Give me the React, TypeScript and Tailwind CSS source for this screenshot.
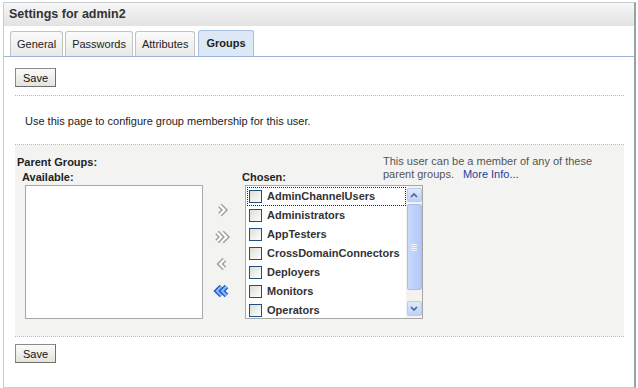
import React from "react";

const F = { fontFamily: '"Liberation Sans", Arial, sans-serif' };

function Chevron({ dir, double, blue }: { dir: "r" | "l"; double?: boolean; blue?: boolean }) {
  const outer = blue ? "#1d5fc4" : "#9c9c9c";
  const inner = blue ? "#8ab8ff" : "#ffffff";
  const one = (x: number) =>
    dir === "r" ? `M${x} 2.5 L${x + 4.5} 7 L${x} 11.5` : `M${x + 4.5} 2.5 L${x} 7 L${x + 4.5} 11.5`;
  const xs = double ? [4, 9] : [7];
  return (
    <svg width="20" height="14" viewBox="0 0 20 14">
      {xs.map((x) => (
        <g key={x}>
          <path d={one(x)} fill="none" stroke={outer} strokeWidth="5" strokeLinejoin="miter" />
          <path d={one(x)} fill="none" stroke={inner} strokeWidth="2.2" strokeLinejoin="miter" />
        </g>
      ))}
    </svg>
  );
}

function SaveBtn() {
  return (
    <button
      className="h-[19px] w-[41px] border border-[#8a8a8a] border-r-[#6f6f6f] border-b-[#6f6f6f] bg-gradient-to-b from-[#fbfbf9] to-[#e4e3dc] text-[11px] text-[#111] leading-[16px]"
      style={F}
    >
      Save
    </button>
  );
}

function Check() {
  return (
    <svg width="13" height="13" viewBox="0 0 13 13" className="shrink-0">
      <defs>
        <linearGradient id="cbg" x1="0" y1="0" x2="1" y2="1">
          <stop offset="0" stopColor="#dcdcd6" />
          <stop offset="1" stopColor="#ffffff" />
        </linearGradient>
      </defs>
      <rect x="0.5" y="0.5" width="12" height="12" fill="url(#cbg)" stroke="#1c5180" strokeWidth="1" />
    </svg>
  );
}

const items = [
  "AdminChannelUsers",
  "Administrators",
  "AppTesters",
  "CrossDomainConnectors",
  "Deployers",
  "Monitors",
  "Operators",
];

export default function App() {
  return (
    <div className="w-[638px] h-[388px] bg-white overflow-hidden" style={F}>
      <div className="ml-[3px] mt-[2px] w-[633px] h-[386px] border border-[#c9ccd0] border-r-2 border-r-[#9da0a3] flex flex-col">
        <div className="h-[23px] bg-gradient-to-b from-[#f7f7f7] via-[#ececec] to-[#e3e3e3] flex items-center pl-[5px] text-[12.5px] font-bold text-[#333]">
          Settings for admin2
        </div>
        <div className="mt-[5px] pl-[6px] flex items-end gap-[2px] border-b border-[#9db3d8] h-[26px]">
          {["General", "Passwords", "Attributes"].map((t) => (
            <div
              key={t}
              className="h-[25px] px-[6px] flex items-center border border-b-0 border-[#c3c3c3] rounded-t-[3px] bg-gradient-to-b from-[#fbfbfb] to-[#e9e9e9] text-[11px] text-[#222]"
            >
              {t}
            </div>
          ))}
          <div className="ml-[1px] h-[26px] px-[7px] flex items-center border border-b-0 border-[#a9bfdf] rounded-t-[3px] bg-[#dce8f6] text-[11px] font-bold text-[#222]">
            Groups
          </div>
        </div>
        <div className="pl-[11px] pr-[10px]">
          <div className="mt-[11px] flex">
            <SaveBtn />
          </div>
          <div className="mt-[8px] border-t border-dotted border-[#b5b5b5]" />
          <div className="mt-[18px] pl-[10px] text-[11px] text-[#222] leading-[14px]">
            Use this page to configure group membership for this user.
          </div>
          <div className="mt-[16px] border-t border-dotted border-[#b5b5b5]" />
          <div className="h-[191px] bg-[#f3f4f2] pl-[2px] flex flex-col">
            <div className="flex mt-[10px]">
              <div className="w-[366px]">
                <div className="text-[11px] font-bold text-[#222] leading-[14px]">Parent Groups:</div>
                <div className="flex text-[11px] font-bold text-[#222] leading-[14px] mt-[1px]">
                  <div className="pl-[5px] w-[225px]">Available:</div>
                  <div>Chosen:</div>
                </div>
              </div>
              <div className="text-[11px] text-[#555] leading-[13px] whitespace-nowrap">
                This user can be a member of any of these
                <br />
                parent groups.
                <span className="ml-[9px] text-[#1a3e9c]">More Info...</span>
              </div>
            </div>
            <div className="flex mt-[1px] pl-[8px]">
              <div className="w-[178px] h-[134px] bg-white border border-[#a8a8a8]" />
              <div className="w-[42px] flex flex-col items-center pt-[18px] gap-[13px] pr-[3px]">
                <Chevron dir="r" />
                <Chevron dir="r" double />
                <Chevron dir="l" />
                <Chevron dir="l" double blue />
              </div>
              <div className="w-[178px] h-[134px] bg-white border border-[#a8a8a8] flex">
                <div className="flex-1 pt-[1px] pl-[1px] overflow-hidden">
                  {items.map((it, i) => (
                    <div
                      key={it}
                      className={
                        "h-[19px] flex items-center gap-[5px] pl-[2px] " +
                        (i === 0 ? "outline outline-1 outline-dotted outline-[#222] -outline-offset-1" : "")
                      }
                    >
                      <Check />
                      <span className="text-[11px] font-bold text-[#333] whitespace-nowrap">{it}</span>
                    </div>
                  ))}
                </div>
                <div className="w-[16px] bg-[#f3f2ec] flex flex-col items-center py-[2px]">
                  <div className="w-[15px] h-[14px] rounded-[2px] border border-[#b8cbf4] bg-gradient-to-b from-[#dfe8fd] to-[#bcd0fb] flex items-center justify-center">
                    <svg width="8" height="5" viewBox="0 0 8 5"><path d="M1 4 L4 1 L7 4" fill="none" stroke="#4d6185" strokeWidth="1.6" /></svg>
                  </div>
                  <div className="mt-[2px] w-[15px] h-[86px] rounded-[2px] border border-[#a9bff0] bg-gradient-to-r from-[#c9d8fc] via-[#bccffb] to-[#b5c9f8] flex flex-col items-center justify-center gap-[1px]">
                    <div className="w-[6px] h-[1px] bg-[#eef3ff]" />
                    <div className="w-[6px] h-[1px] bg-[#eef3ff]" />
                    <div className="w-[6px] h-[1px] bg-[#eef3ff]" />
                    <div className="w-[6px] h-[1px] bg-[#eef3ff]" />
                  </div>
                  <div className="flex-1" />
                  <div className="w-[15px] h-[15px] rounded-[2px] border border-[#b8cbf4] bg-gradient-to-b from-[#dfe8fd] to-[#bcd0fb] flex items-center justify-center">
                    <svg width="8" height="5" viewBox="0 0 8 5"><path d="M1 1 L4 4 L7 1" fill="none" stroke="#4d6185" strokeWidth="1.6" /></svg>
                  </div>
                </div>
              </div>
            </div>
          </div>
          <div className="border-t border-dotted border-[#b5b5b5]" />
          <div className="mt-[7px] flex">
            <SaveBtn />
          </div>
        </div>
      </div>
    </div>
  );
}
